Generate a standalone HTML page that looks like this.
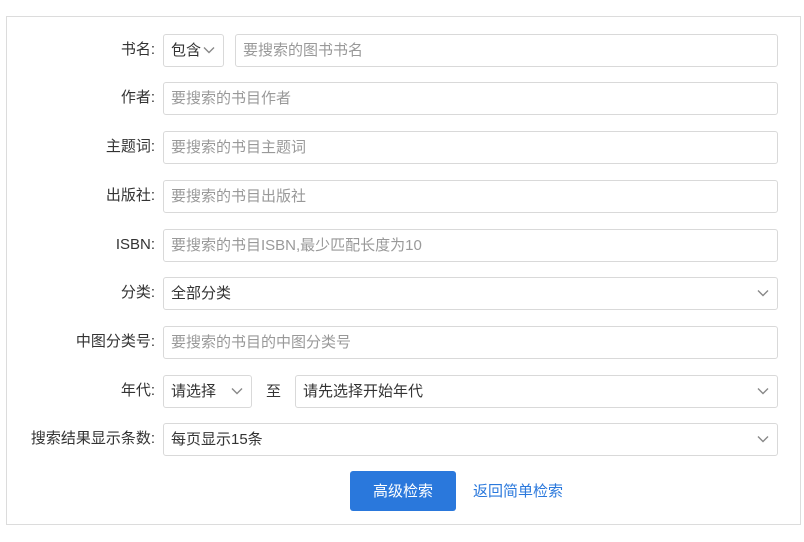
<!DOCTYPE html>
<html><head><meta charset="utf-8"><style>
*{box-sizing:border-box;margin:0;padding:0}
body{width:804px;height:542px;background:#fff;font-family:"Liberation Sans","Noto Sans CJK SC",sans-serif;position:relative;overflow:hidden}
.box{position:absolute;left:6px;top:16px;width:795px;height:509px;border:1px solid #dcdcdc}
.lbl{position:absolute;right:649px;font-size:15px;color:#333;line-height:20px}
.f{position:absolute;height:33px;border:1px solid #d9d9d9;border-radius:3px;font-size:15px;line-height:32px;padding-left:7px;color:#999;background:#fff}
.s{color:#333}
.ch{position:absolute;right:8px;top:11px;width:12px;height:8px}
.btn{position:absolute;left:350px;top:471px;width:106px;height:40px;background:#2a78dc;border-radius:3px;color:#fff;font-size:15px;line-height:41px;text-align:center}
.lnk{position:absolute;left:473px;top:482px;color:#2a78dc;font-size:15px;line-height:20px}
</style></head><body>
<div class="box"></div>
<svg width="0" height="0" style="position:absolute"><defs><symbol id="c" viewBox="0 0 12 8"><path d="M1 1.5 L6 6.5 L11 1.5" fill="none" stroke="#888" stroke-width="1.4"/></symbol></defs></svg>

<div class="lbl" style="top:40px">书名:</div>
<div class="f s" style="left:163px;top:34px;width:61px">包含<svg class="ch"><use href="#c"/></svg></div>
<div class="f" style="left:235px;top:34px;width:543px">要搜索的图书书名</div>

<div class="lbl" style="top:88px">作者:</div>
<div class="f" style="left:163px;top:82px;width:615px">要搜索的书目作者</div>

<div class="lbl" style="top:137px">主题词:</div>
<div class="f" style="left:163px;top:131px;width:615px">要搜索的书目主题词</div>

<div class="lbl" style="top:186px">出版社:</div>
<div class="f" style="left:163px;top:180px;width:615px">要搜索的书目出版社</div>

<div class="lbl" style="top:235px">ISBN:</div>
<div class="f" style="left:163px;top:229px;width:615px">要搜索的书目ISBN,最少匹配长度为10</div>

<div class="lbl" style="top:283px">分类:</div>
<div class="f s" style="left:163px;top:277px;width:615px">全部分类<svg class="ch"><use href="#c"/></svg></div>

<div class="lbl" style="top:332px">中图分类号:</div>
<div class="f" style="left:163px;top:326px;width:615px">要搜索的书目的中图分类号</div>

<div class="lbl" style="top:381px">年代:</div>
<div class="f s" style="left:163px;top:375px;width:89px">请选择<svg class="ch"><use href="#c"/></svg></div>
<div style="position:absolute;left:266px;top:380px;font-size:15px;color:#333">至</div>
<div class="f s" style="left:295px;top:375px;width:483px">请先选择开始年代<svg class="ch"><use href="#c"/></svg></div>

<div class="lbl" style="top:429px">搜索结果显示条数:</div>
<div class="f s" style="left:163px;top:423px;width:615px">每页显示15条<svg class="ch"><use href="#c"/></svg></div>

<div class="btn">高级检索</div>
<div class="lnk">返回简单检索</div>
</body></html>
